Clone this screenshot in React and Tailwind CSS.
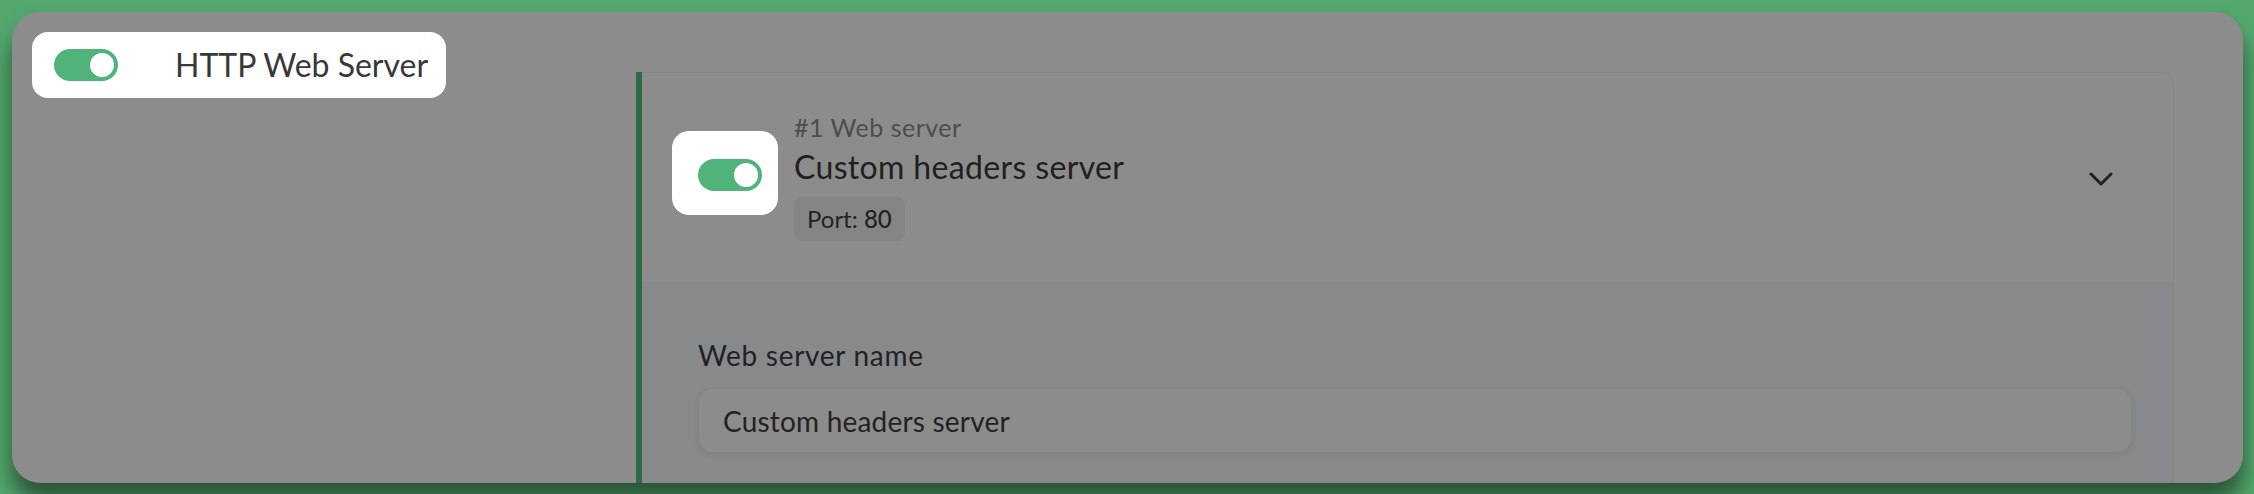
import React from "react";

function Toggle() {
  return (
    <div className="w-[64px] h-[32px] rounded-full bg-[#4fb37a] flex items-center justify-end pr-[4px] shrink-0">
      <div className="w-[24px] h-[24px] rounded-full bg-white" />
    </div>
  );
}

export default function App() {
  return (
    <div
      className="w-[2254px] h-[494px] bg-[#53a86e] overflow-hidden pt-[12px] pl-[12px] pr-[11px]"
      style={{ fontFamily: "Lato, 'Open Sans', sans-serif" }}
    >
      <div className="h-[471px] rounded-[28px] bg-[#8c8c8c] shadow-[0_18px_22px_rgba(0,0,0,0.5)] flex overflow-hidden">
        {/* left column */}
        <div className="w-[624px] shrink-0 pl-[20px] pt-[20px]">
          <div className="w-[414px] h-[66px] rounded-[16px] bg-white flex items-center pl-[22px]">
            <Toggle />
            <span className="ml-[57px] text-[32px] leading-[40px] text-[#383838]">HTTP Web Server</span>
          </div>
        </div>

        {/* card column */}
        <div className="flex-1 pt-[60px] pr-[69px] flex">
          <div className="flex-1 border-l-[6px] border-[#2d6a45] flex flex-col">
            <div className="h-[210px] bg-[#8c8c8c] rounded-tr-[14px] border-t border-r border-[#878787] flex items-start pl-[30px]">
              <div className="mt-[58px] w-[106px] h-[84px] rounded-[17px] bg-white pl-[26px] pt-[28px] shrink-0">
                <Toggle />
              </div>
              <div className="ml-[16px] mt-[38px] flex flex-col">
                <div className="text-[25px] leading-[32px] tracking-[0.5px] text-[#4d4d4d]">#1 Web server</div>
                <div className="mt-[4px] text-[32px] leading-[40px] tracking-[0.35px] text-[#202020]">Custom headers server</div>
                <div className="mt-[10px] self-start h-[44px] px-[13px] rounded-[8px] bg-[#858585] flex items-center text-[24px] text-[#222]">
                  <span>Port:&nbsp;</span>
                  <span className="font-medium">80</span>
                </div>
              </div>
              <div className="ml-auto mr-[60px] mt-[99px]">
                <svg width="24" height="15" viewBox="0 0 24 15" fill="none">
                  <polyline points="2,2 12,12 22,2" stroke="#222" strokeWidth="3" strokeLinecap="round" strokeLinejoin="round" />
                </svg>
              </div>
            </div>
            <div className="flex-1 bg-[#88898b] border-r border-[#848485] pl-[56px] pr-[41px] pt-[55px]">
              <div className="text-[28px] leading-[36px] tracking-[0.7px] text-[#222]">Web server name</div>
              <div className="mt-[15px] h-[65px] rounded-[14px] bg-[#8c8c8c] border border-[#848484] shadow-[0_2px_6px_rgba(0,0,0,0.06)] flex items-center pl-[24px] text-[28px] leading-[34px] tracking-[0.2px] text-[#222]">
                Custom headers server
              </div>
            </div>
          </div>
        </div>
      </div>
    </div>
  );
}
